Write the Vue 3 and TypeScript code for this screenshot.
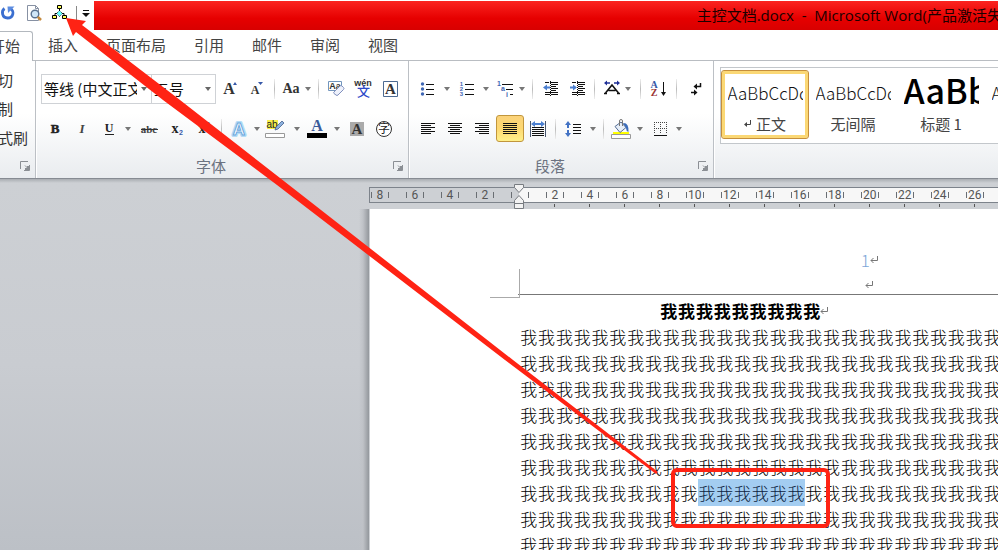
<script setup lang="ts">
import { ref } from 'vue'

interface Tool {
  kind: 'tool' | 'caret' | 'sep'
  icon?: string
  label?: string
  w: number
  on?: boolean
}

const tool = (icon: string, label: string, w = 27, on = false): Tool => ({ kind: 'tool', icon, label, w, on })
const caret = (label: string): Tool => ({ kind: 'caret', label, w: 12 })
const sep = (w = 8): Tool => ({ kind: 'sep', w })

const serif = 'font-family="Liberation Serif, serif" font-weight="700" text-anchor="middle"'
const sans = 'font-family="Liberation Sans, sans-serif" text-anchor="middle"'
const cjk = 'font-family="Noto Sans CJK SC, sans-serif" text-anchor="middle"'

// Every glyph is drawn on a 24 x 24 grid.
const icons: Record<string, string> = {
  undo: '<path d="M8.500 7.500C5 10 6 17 11.500 17C17.500 17 18.500 10.500 14.500 7.500" fill="none" stroke="#3b6fd0" stroke-width="2.800"/><path d="M11.500 5.500h7l-6.500 6.500z" fill="#5c8ce0"/>',
  preview: '<path d="M5.500 4.500h8l3 3v12h-11z" fill="#fff" stroke="#8791a3"/><path d="M13.500 4.500v3h3" fill="none" stroke="#8791a3"/><circle cx="13" cy="13" r="3.800" fill="#cfe6f7" stroke="#59718f" stroke-width="1.400"/><path d="M15.800 15.800l3.200 3.200" stroke="#c58a3d" stroke-width="2.600"/>',
  chart: '<path d="M11.500 8v2M7 14v-1.500h2.500M16 14v-1.500h-2.500" fill="none" stroke="#000"/><path d="M11.500 9.500l3 3-3 3-3-3z" fill="#6ff" stroke="#000" stroke-dasharray="1 1"/><path d="M9.500 4.500h4v3h-4zM4.500 14.500h4v3h-4zM14.500 14.500h4v3h-4z" fill="#ff5" stroke="#000"/>',
  grow: `<text x="11" y="17" font-size="16" ${serif} fill="#333">A</text><path d="M15 8l2-3 2 3z" fill="#3658a8"/>`,
  shrink: `<text x="10" y="17" font-size="12" ${serif} fill="#333">A</text><path d="M13 5h5l-2.500 3z" fill="#3658a8"/>`,
  case: `<text x="13" y="16" font-size="14" ${serif} fill="#333">Aa</text>`,
  clear: `<path d="M4.500 4.500h13v9h-13z" fill="#fff" stroke="#7295bd"/><text x="11" y="12" font-size="9" font-weight="700" ${sans} fill="#333">Aa</text><path d="M10 15l6-6q1-1 2 0l1.500 1.500q1 1 0 2L14 18q-1 1-2 0l-2-1.500q-1-.5 0-1.500z" fill="#eef1fb" stroke="#8190bd"/>`,
  phonetic: `<text x="12" y="9" font-size="9" font-weight="700" ${sans} fill="#333">wén</text><text x="12.500" y="19" font-size="13" font-weight="500" ${cjk} fill="#2c49c8">文</text>`,
  border: `<path d="M5.500 4.500h14v15h-14z" fill="#fff" stroke="#4c6a92"/><text x="12.500" y="17" font-size="15" ${serif} fill="#333">A</text>`,
  bold: `<text x="12" y="16" font-size="13" ${serif} fill="#222" stroke="#222" stroke-width=".5">B</text>`,
  italic: '<text x="12" y="16" font-size="13" font-family="Liberation Serif, serif" font-style="italic" font-weight="700" text-anchor="middle" fill="#444">I</text>',
  underline: `<text x="12" y="15" font-size="12" ${serif} fill="#222">U</text><path d="M8 17.500h9" stroke="#222"/>`,
  strike: `<text x="13" y="16" font-size="11" ${serif} fill="#444">abc</text><path d="M5 12.500h17" stroke="#333"/>`,
  sub: `<text x="12" y="16" font-size="14" ${serif} fill="#222">x</text><text x="18" y="18" font-size="7" font-weight="700" ${sans} fill="#3658a8">2</text>`,
  sup: `<text x="12" y="16" font-size="14" ${serif} fill="#222">x</text><text x="18" y="10" font-size="7" font-weight="700" ${sans} fill="#3658a8">2</text>`,
  effect: `<text x="12" y="18" font-size="17" font-weight="700" ${sans} fill="#fff" stroke="#b4dcf6" stroke-width="4" stroke-linejoin="round">A</text><text x="12" y="18" font-size="17" font-weight="700" ${sans} fill="#fff" stroke="#6ba6dc" stroke-width="1">A</text>`,
  highlight: `<path d="M2 3h11v9H2z" fill="#f8f04a"/><text x="7" y="11" font-size="10" ${sans} fill="#222">ab</text><path d="M10 13l1-3 6-6 2 2-6 6z" fill="#8db1de" stroke="#45618c" stroke-width=".8"/><path d="M.5 16.500h19v4H.5z" fill="#fff" stroke="#999"/>`,
  color: `<text x="12" y="14" font-size="16" ${serif} fill="#3a5a9a">A</text><path d="M2 16h20v5H2z" fill="#000"/>`,
  shade: `<path d="M5 5h14v14H5z" fill="#aaa"/><text x="12" y="17" font-size="15" ${serif} fill="#333">A</text>`,
  enclose: `<circle cx="12" cy="12" r="7.500" fill="#fff" stroke="#333"/><text x="12" y="16" font-size="12" ${cjk} fill="#222">字</text>`,
  bullets: '<g fill="#3f66b4"><circle cx="6.500" cy="7" r="1.700"/><circle cx="6.500" cy="12" r="1.700"/><circle cx="6.500" cy="17" r="1.700"/></g><path d="M10 7.500h8M10 12.500h8M10 17.500h8" stroke="#111"/>',
  numbers: `<g font-size="6" font-weight="700" ${sans} fill="#3f66b4"><text x="6.500" y="9">1</text><text x="6.500" y="14">2</text><text x="6.500" y="19">3</text></g><path d="M10 7.500h9M10 12.500h9M10 17.500h9" stroke="#111"/>`,
  levels: `<g font-size="7" font-weight="700" ${sans} fill="#3f66b4"><text x="7" y="9">1</text><text x="11" y="14">a</text><text x="15" y="20">i</text></g><path d="M10 7.500h11M14 12.500h7M18 17.500h3" stroke="#111"/>`,
  outdent: '<path d="M7 5.500h4M12 5.500h8M7 17.500h5M13 17.500h7M13 7.500h7M13 9.500h5M13 11.500h7M13 13.500h5M7 15.500h13" stroke="#111"/><path d="M12.500 4v16" stroke="#111" stroke-dasharray="1 1"/><path d="M5 10.500l4-3v2h3v2H9v2z" fill="#4b7fd0"/>',
  indent: '<path d="M7 5.500h4M12 5.500h8M7 17.500h5M13 17.500h7M13 7.500h7M13 9.500h5M13 11.500h7M13 13.500h5M7 15.500h13" stroke="#111"/><path d="M12.500 4v16" stroke="#111" stroke-dasharray="1 1"/><path d="M12 10.500l-4-3v2H5v2h3v2z" fill="#4b7fd0"/>',
  scale: '<path d="M7.500 16l6.500-8 6.500 8M10.500 13.500h7" fill="none" stroke="#111" stroke-width="1.600"/><path d="M6 16.500h3M19 16.500h3" stroke="#111" stroke-width="1.500"/><path d="M9 3.500v5L6 6zM19 3.500v5L22 6z" fill="#1f2f96"/><path d="M8 6h4M16 6h4" stroke="#1f2f96" stroke-width="1.400"/>',
  sort: `<text x="8" y="11" font-size="10" ${serif} fill="#3658a8">A</text><text x="8" y="19" font-size="10" ${serif} fill="#9b3434">Z</text><path d="M17.500 5v13" stroke="#111"/><path d="M15 15h5l-2.500 4z" fill="#111"/>`,
  marks: '<path d="M16.500 6v3.500H11" fill="none" stroke="#111" stroke-width="1.500"/><path d="M13 6.500v6l-3.500-3z" fill="#111"/><path d="M7 15.500h4" stroke="#111" stroke-width="1.500"/><path d="M10 12.500v6l3.500-3z" fill="#111"/>',
  left: '<path d="M5 6.500h14M5 8.500h10M5 10.500h14M5 12.500h10M5 14.500h14M5 16.500h10" stroke="#111"/>',
  center: '<path d="M5 6.500h14M7 8.500h10M5 10.500h14M7 12.500h10M5 14.500h14M7 16.500h10" stroke="#111"/>',
  right: '<path d="M5 6.500h14M9 8.500h10M5 10.500h14M9 12.500h10M5 14.500h14M9 16.500h10" stroke="#111"/>',
  justify: '<path d="M5 6.500h14M5 8.500h14M5 10.500h14M5 12.500h14M5 14.500h14M5 16.500h14" stroke="#111"/>',
  spread: '<path d="M6 10.500h12M6 12.500h12M6 14.500h12M6 16.500h12M6 18.500h12" stroke="#111"/><path d="M4.500 4v16M19.500 4v16" stroke="#48566e"/><path d="M5 7l4-3v2h6V4l4 3-4 3V8H9v2z" fill="#4b7fd0"/>',
  spacing: '<path d="M12 7.500h8M12 10.500h8M12 13.500h8M12 16.500h8" stroke="#111"/><path d="M7 4l3 4H8v3H6V8H4zM7 20l3-4H8v-3H6v3H4z" fill="#4272c4"/>',
  fill: '<path d="M4 15h16v2H4z" fill="#ff0"/><path d="M6 9.500l6-4.500 5 5.500-6 5z" fill="#e6eef8" stroke="#566f95"/><path d="M10.500 9V4q0-1.500 1.500-1.500T13.500 4v5" fill="none" stroke="#777"/><path d="M14 6q6-.5 5.500 9-2.500-1-2.500-4z" fill="#3b6cba"/><path d="M2.500 17.500h19v4h-19z" fill="#fff" stroke="#999"/>',
  borders: '<path d="M6.500 5v12M12.500 5v12M18.500 5v12M6 5.500h13M6 11.500h13" stroke="#444" stroke-dasharray="1 1"/><path d="M6 18.500h13" stroke="#111"/>',
}

const fontTop: Tool[] = [
  tool('grow', '增大字体'), tool('shrink', '缩小字体'), sep(), tool('case', '更改大小写', 24), caret('大小写选项'), sep(),
  tool('clear', '清除格式'), tool('phonetic', '拼音指南'), tool('border', '字符边框', 28),
]
const fontBottom: Tool[] = [
  tool('bold', '加粗'), tool('italic', '倾斜'), tool('underline', '下划线'), caret('下划线选项'), tool('strike', '删除线'),
  tool('sub', '下标'), tool('sup', '上标'), sep(12), tool('effect', '文本效果', 24), caret('文本效果选项'),
  tool('highlight', '突出显示', 28), caret('突出显示选项'), tool('color', '字体颜色', 28), caret('字体颜色选项'),
  tool('shade', '字符底纹'), tool('enclose', '带圈字符'),
]
const paraTop: Tool[] = [
  tool('bullets', '项目符号'), caret('项目符号选项'), tool('numbers', '编号'), caret('编号选项'), tool('levels', '多级列表', 24), caret('多级列表选项'),
  sep(), tool('outdent', '减少缩进量'), tool('indent', '增加缩进量'), sep(), tool('scale', '中文版式', 24), caret('中文版式选项'),
  sep(12), tool('sort', '排序', 24), sep(12), tool('marks', '显示编辑标记'),
]
const paraBottom: Tool[] = [
  tool('left', '左对齐'), tool('center', '居中'), tool('right', '右对齐', 28), tool('justify', '两端对齐', 28, true), tool('spread', '分散对齐'),
  sep(), tool('spacing', '行距', 28), caret('行距选项'), sep(), tool('fill', '底纹'), caret('底纹选项'), tool('borders', '边框'), caret('边框选项'),
]

const groups = [
  { name: '字体', cls: 'font', top: fontTop, bottom: fontBottom },
  { name: '段落', cls: 'para', top: paraTop, bottom: paraBottom },
]

const tabs = ['开始', '插入', '页面布局', '引用', '邮件', '审阅', '视图']
const quick = [
  { icon: 'undo', label: '重复' },
  { icon: 'preview', label: '打印预览' },
  { icon: 'chart', label: '组织结构图' },
]
const clip = ['剪切', '复制', '格式刷']
const styles = [
  { sample: 'AaBbCcDd', name: '正文', mark: true, big: false },
  { sample: 'AaBbCcDd', name: '无间隔', mark: false, big: false },
  { sample: 'AaBb', name: '标题 1', mark: false, big: true },
  { sample: 'AaBbCcDd', name: '标题 2', mark: false, big: false },
]
const chosen = ref(0)
const units = Array.from({ length: 24 }, (_, i) => (i - 4) * 2)

const word = '我'
const lines = Array.from({ length: 10 }, (_, i) =>
  i === 6 ? [word.repeat(10), word.repeat(6), word.repeat(23)] : [word.repeat(39), '', ''],
)
</script>

<template>
  <div class="app">
    <header class="titlebar">
      <div class="quick">
        <button v-for="q in quick" :key="q.icon" class="qbtn" :aria-label="q.label">
          <svg width="24" height="24" viewBox="0 0 24 24" v-html="icons[q.icon]" />
        </button>
        <span class="qsep"></span>
        <button class="qmore" aria-label="自定义快速访问工具栏">
          <svg width="8" height="8" viewBox="0 0 8 8"><path d="M1 1.500h6" stroke="#111" /><path d="M0 4h8L4 8z" fill="#111" /></svg>
        </button>
      </div>
      <div class="caption">
        <h1>主控文档.docx&nbsp; -&nbsp; Microsoft Word(产品激活失败)</h1>
      </div>
    </header>

    <nav class="tabs">
      <a v-for="(t, i) in tabs" :key="t" href="#" :class="{ active: i === 0 }">{{ t }}</a>
    </nav>

    <section class="ribbon">
      <div class="group clipboard">
        <div class="cliplist">
          <button v-for="c in clip" :key="c">{{ c }}</button>
        </div>
        <button class="launch" aria-label="剪贴板选项">
          <svg width="10" height="10" viewBox="0 0 10 10"><path d="M.5 8V.5H8M5 4.500l3 3M9.500 4v5.500H4" fill="none" stroke="#8b8f94" /><path d="M5 9V7h2V5h2v4z" fill="#8b8f94" /></svg>
        </button>
      </div>

      <div v-for="g in groups" :key="g.name" class="group" :class="g.cls">
        <div v-for="(row, r) in [g.top, g.bottom]" :key="r" class="tools">
          <template v-if="g.cls === 'font' && r === 0">
            <span class="pick family">
              <select aria-label="字体"><option>等线 (中文正文)</option></select>
              <svg width="6" height="4" viewBox="0 0 6 4"><path d="M0 0h6L3 4z" fill="#666" /></svg>
            </span>
            <span class="pick size">
              <select aria-label="字号"><option>五号</option></select>
              <svg width="6" height="4" viewBox="0 0 6 4"><path d="M0 0h6L3 4z" fill="#666" /></svg>
            </span>
          </template>
          <template v-for="(t, i) in row" :key="i">
            <span v-if="t.kind === 'sep'" class="sep" :style="{ width: t.w + 'px' }"></span>
            <button v-else class="tool" :class="{ on: t.on }" :aria-label="t.label" :style="{ width: t.w + 'px' }">
              <svg v-if="t.kind === 'tool'" width="24" height="24" viewBox="0 0 24 24" v-html="icons[t.icon!]" />
              <svg v-else width="6" height="4" viewBox="0 0 6 4"><path d="M0 0h6L3 4z" fill="#777" /></svg>
            </button>
          </template>
        </div>
        <div class="foot">
          <span>{{ g.name }}</span>
          <button class="launch" :aria-label="g.name + '选项'">
            <svg width="10" height="10" viewBox="0 0 10 10"><path d="M.5 8V.5H8M5 4.500l3 3M9.500 4v5.500H4" fill="none" stroke="#8b8f94" /><path d="M5 9V7h2V5h2v4z" fill="#8b8f94" /></svg>
          </button>
        </div>
      </div>

      <div class="group gallery">
        <div class="cards">
          <button v-for="(s, i) in styles" :key="i" class="card" :class="{ chosen: chosen === i }" @click="chosen = i">
            <span class="sample" :class="{ big: s.big }">{{ s.sample }}</span>
            <span class="name">
              <svg v-if="s.mark" width="8" height="8" viewBox="0 0 8 8"><path d="M6.500 0v4.500H2" fill="none" stroke="#444" /><path d="M3 2v5L0 4.500z" fill="#444" /></svg>
              {{ s.name }}
            </span>
          </button>
        </div>
      </div>
    </section>

    <main class="desk">
      <div class="gutter"></div>
      <div class="view">
        <div class="ruler">
          <div class="scale">
            <span v-for="u in units" :key="u" class="unit" :class="{ pos: u > 0 }"><b>{{ u === 0 ? '' : Math.abs(u) }}</b></span>
          </div>
          <svg class="stops" width="10" height="26" viewBox="0 0 10 26">
            <path d="M.5 .5h9v3L5 8.500.5 3.500zM5 11.500l4.500 5v3h-9v-3zM.5 19.500h9v5h-9z" fill="#f2f2f2" stroke="#777b80" />
          </svg>
        </div>
        <article class="page">
          <div class="pagehead">
            <div class="hline">1<svg width="8" height="8" viewBox="0 0 8 8"><path d="M7.500 0v4.500H1M3.500 2L1 4.500 3.500 7" fill="none" stroke="#777" /></svg></div>
            <div class="hline"><svg width="8" height="8" viewBox="0 0 8 8"><path d="M7.500 0v4.500H1M3.500 2L1 4.500 3.500 7" fill="none" stroke="#777" /></svg></div>
            <i class="corner"></i>
          </div>
          <h2><span>{{ word.repeat(9) }}</span><svg width="8" height="8" viewBox="0 0 8 8"><path d="M7.500 0v4.500H1M3.500 2L1 4.500 3.500 7" fill="none" stroke="#777" /></svg></h2>
          <p v-for="(l, i) in lines" :key="i">{{ l[0] }}<mark v-if="l[1]">{{ l[1] }}</mark>{{ l[2] }}</p>
        </article>
      </div>
    </main>

    <svg class="notes" width="998" height="550" viewBox="0 0 998 550" aria-hidden="true">
      <path d="M66 18L86 21 82 25 180 100 289 185 513 360 658 472 656 474 505 360 277 185 163 100 76 32 73 36z" fill="#ff2314" />
      <rect x="673" y="470" width="155" height="56" rx="4" fill="none" stroke="#ff2314" stroke-width="4" />
    </svg>
  </div>
</template>

<style>
html,
body {
  margin: 0;
  overflow: hidden;
}
</style>

<style scoped>
.app {
  position: relative;
  display: flex;
  flex-direction: column;
  height: 100vh;
  overflow: hidden;
  background: #fff;
  color: #333;
  font: 15px/20px 'Noto Sans CJK SC', sans-serif;
}
button {
  display: flex;
  align-items: center;
  justify-content: center;
  flex: none;
  margin: 0;
  padding: 0;
  border: 0;
  background: none;
  color: inherit;
  font: inherit;
}
svg {
  display: block;
  flex: none;
}
.titlebar {
  display: flex;
  flex: none;
  height: 30px;
}
.quick {
  display: flex;
  align-items: center;
  flex: none;
  width: 94px;
  box-sizing: border-box;
  padding: 0 0 4px;
}
.qbtn {
  width: 24px;
  margin-right: 2px;
}
.qbtn:first-child {
  margin-left: -4px;
}
.qsep {
  width: 1px;
  height: 14px;
  margin: 0 5px 0 2px;
  background: #888;
}
.caption {
  display: flex;
  flex: 1;
  min-width: 0;
  margin-top: 1px;
  background: linear-gradient(#fb2420, #e60000 60%, #d80000);
}
.caption::before {
  content: '';
  flex: 2;
}
.caption h1 {
  flex: 1;
  min-width: 0;
  margin: 0;
  overflow: hidden;
  color: #1c0000;
  font: 15px/29px 'Open Sans', 'Noto Sans CJK SC', sans-serif;
  white-space: nowrap;
}
.tabs {
  display: flex;
  flex: none;
  height: 31px;
  box-shadow: inset 0 -1px #b9bdc2;
}
.tabs a {
  padding: 5px 14px 6px;
  color: #444;
  text-decoration: none;
}
.tabs a.active {
  margin: 1px 1px 0 -25px;
  padding: 4px 12px 6px 14px;
  border: 1px solid #b3b8be;
  border-bottom: 0;
  border-radius: 3px 3px 0 0;
  background: #fff;
}
.ribbon {
  display: flex;
  flex: none;
  height: 117px;
  border-bottom: 1px solid #868b92;
  background: linear-gradient(#fff 45%, #e9ecef);
}
.group {
  display: flex;
  flex-direction: column;
  flex: none;
  box-sizing: border-box;
  border-right: 1px solid #bcc0c5;
  box-shadow: 1px 0 #fff;
}
.clipboard {
  width: 36px;
}
.cliplist {
  display: flex;
  flex-direction: column;
  align-items: flex-start;
  gap: 9px;
  height: 91px;
  margin-left: -17px;
  padding-top: 9px;
  box-sizing: border-box;
}
.clipboard .launch {
  align-self: flex-end;
  margin: 9px 5px 0 0;
}
.font {
  width: 373px;
  padding: 14px 0 0 5px;
}
.para {
  width: 305px;
  padding: 14px 0 0 5px;
}
.tools {
  display: flex;
  align-items: center;
  height: 28px;
}
.tools + .tools {
  height: 27px;
  margin-top: 12px;
}
.pick {
  display: flex;
  align-items: center;
  box-sizing: border-box;
  height: 30px;
  margin-right: -1px;
  padding-right: 4px;
  border: 1px solid #cfd2d6;
  background: #fff;
}
.family {
  width: 111px;
}
.size {
  width: 65px;
  margin-right: 0;
}
.pick select {
  flex: 1;
  min-width: 0;
  margin-right: 4px;
  padding: 0 0 0 2px;
  border: 0;
  outline: 0;
  appearance: none;
  background: none;
  color: #111;
  font: inherit;
  overflow: hidden;
}
.tool {
  height: 27px;
}
.tool.on {
  border: 1px solid #c1963c;
  border-radius: 3px;
  background: linear-gradient(#fbd27a, #fdd872 50%, #fff08a);
}
.sep {
  flex: none;
  height: 20px;
  background: linear-gradient(#eee, #bbb, #eee) center / 1px 100% no-repeat;
}
.foot {
  display: flex;
  align-items: center;
  height: 20px;
  margin: 14px 5px 0 0;
  color: #6b7280;
}
.foot span {
  flex: 1;
  margin-right: 12px;
  text-align: center;
}
.gallery {
  flex: 1;
  min-width: 0;
  padding: 6px 0 0 6px;
  overflow: hidden;
  border: 0;
}
.cards {
  display: flex;
  height: 73px;
  padding-top: 2px;
  box-sizing: content-box;
  border: 1px solid #c3c7cb;
  border-right: 0;
  background: #fff;
  overflow: hidden;
}
.card {
  flex-direction: column;
  justify-content: flex-start;
  box-sizing: border-box;
  width: 88px;
  height: 69px;
  padding: 0 3px;
  border: 1px solid transparent;
  border-radius: 3px;
}
.card.chosen {
  border-color: #c58f3c;
  box-shadow: inset 0 0 0 3px #fbd875;
}
.sample {
  width: 75px;
  height: 43px;
  overflow: hidden;
  color: #111;
  font-size: 17px;
  font-weight: 300;
  line-height: 44px;
  text-align: left;
  white-space: nowrap;
}
.sample.big {
  color: #000;
  font-size: 34px;
  font-weight: 500;
  line-height: 38px;
}
.name {
  display: flex;
  align-items: center;
  gap: 4px;
  color: #444;
}
.desk {
  display: grid;
  flex: 1;
  grid-template-columns: 37% 1fr;
  min-height: 0;
  background: linear-gradient(#a9adb2, #cdd0d4 4px, #c9ccd1 50%, #bcc0c6);
}
.gutter {
  margin-top: 30px;
  background: linear-gradient(to left, #93979c, #bfc2c7 6px, transparent 10px);
}
.view {
  min-width: 0;
  padding-top: 8px;
  background: linear-gradient(#a9adb2, #cdd0d4 4px);
  overflow: hidden;
}
.ruler {
  position: relative;
  height: 22px;
}
.scale {
  display: flex;
  height: 14px;
  padding-top: 0;
  border: solid #7d838b;
  border-width: 1px 0 1px 1px;
  background: linear-gradient(to right, #cdd0d4 149px, #f7f7f7 149px);
}
.unit {
  position: relative;
  display: flex;
  align-items: center;
  justify-content: center;
  flex: none;
  width: 35px;
  height: 14px;
}
.unit:first-child {
  margin-left: -8px;
}
.unit b {
  width: 16px;
  border: solid #6a6e73;
  border-width: 0 1px;
  color: #555;
  font: 12px/6px Roboto, sans-serif;
  text-align: center;
  height: 6px;
}
.unit.pos::after {
  content: '';
  position: absolute;
  top: 16px;
  left: 17px;
  width: 1px;
  height: 3px;
  background: #555;
}
.stops {
  position: absolute;
  top: -3px;
  left: 145px;
}
.page {
  width: 694px;
  height: 900px;
  margin-left: 1px;
  padding: 38px 150px 0 150px;
  background: #fff;
  color: #111;
  font-size: 17px;
  line-height: 26px;
}
.pagehead {
  position: relative;
  height: 47px;
  margin: 0 0 3px -2px;
  border-bottom: 1px solid #777;
}
.hline {
  display: flex;
  align-items: center;
  justify-content: center;
  height: 25px;
  padding-left: 6px;
  color: #7da7d8;
  font-weight: 300;
}
.corner {
  position: absolute;
  right: 100%;
  bottom: -4px;
  width: 29px;
  height: 28px;
  margin-right: -2px;
  border: solid #aaa;
  border-width: 0 1px 1px 0;
}
h2 {
  display: flex;
  align-items: center;
  margin: 0 0 0 140px;
  color: #000;
  font: inherit;
  font-weight: 700;
}
h2 span {
  width: 160px;
  text-align-last: justify;
}
p {
  margin: 0;
  height: 26px;
  color: #000;
  font-weight: 300;
  text-align: justify;
  text-align-last: justify;
}
mark {
  padding: 1px 0;
  background: #a3cdf1;
  color: #0c2340;
}
.notes {
  position: absolute;
  top: 0;
  left: 0;
  pointer-events: none;
}
</style>
